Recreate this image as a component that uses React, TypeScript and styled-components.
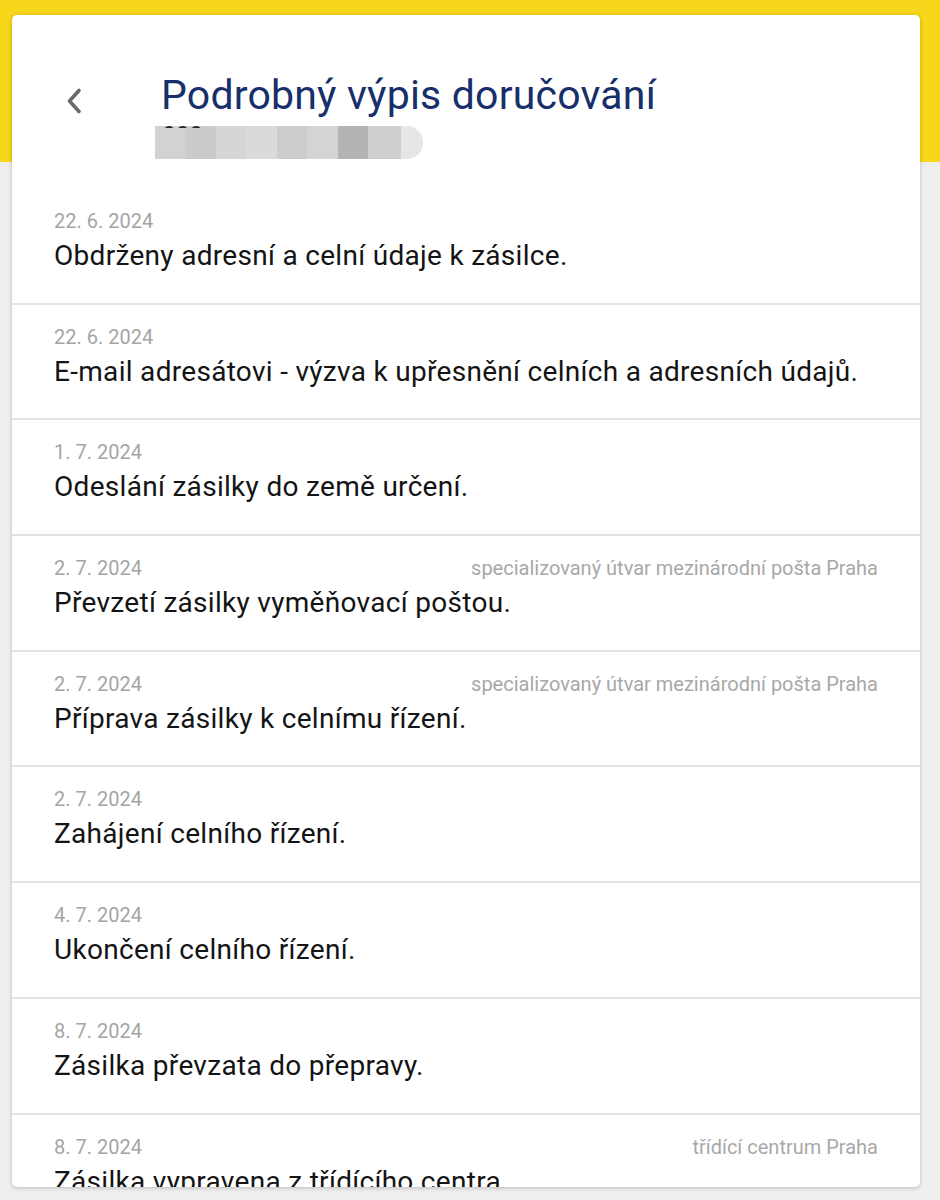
import React from 'react';
import styled, { createGlobalStyle } from 'styled-components';

const GlobalStyle = createGlobalStyle`
  html, body {
    margin: 0;
    padding: 0;
    background: #efefef;
    font-family: Roboto, "Noto Sans", "Liberation Sans", sans-serif;
  }
`;

const Page = styled.div`
  min-height: 1200px;
  background: linear-gradient(#f6d71b 0, #f6d71b 162px, #efefef 162px);
  padding: 15px 20px 0 12px;
  box-sizing: border-box;
`;

const Card = styled.div`
  background: #fff;
  border-radius: 5px;
  height: 1172px;
  overflow: hidden;
  box-shadow: 0 1px 4px rgba(0, 0, 0, 0.22);
`;

const Header = styled.div`
  height: 172px;
  display: flex;
  align-items: flex-start;
  box-sizing: border-box;
  padding: 60px 0 0 50px;
`;

const BackButton = styled.div`
  width: 24px;
  height: 40px;
  display: flex;
  align-items: center;
  justify-content: center;
  margin: 6px 75px 0 0;
`;

const TitleBlock = styled.div`
  display: flex;
  flex-direction: column;
`;

const Title = styled.h1`
  margin: 0;
  font-size: 41px;
  font-weight: 400;
  line-height: 41px;
  letter-spacing: 0.2px;
  color: #172f6a;
`;

const Blurred = styled.div`
  display: flex;
  margin: 10px 0 0 -6px;
  height: 33px;
  align-items: stretch;
  position: relative;
  width: 268px;
`;

const Pixel = styled.div<{ $shade: string; $w: number }>`
  width: ${(p) => p.$w}px;
  background: ${(p) => p.$shade};
`;

const PixelEnd = styled.div`
  width: 22px;
  background: #e6e6e6;
  border-radius: 0 16px 16px 0;
`;

const Peek = styled.div`
  position: absolute;
  left: 8px;
  top: -6px;
  width: 58px;
  height: 8px;
  overflow: hidden;
  color: #222;
  font-size: 22px;
  line-height: 22px;
  letter-spacing: 2px;
`;

const List = styled.div`
  display: flex;
  flex-direction: column;
`;

const Row = styled.div`
  height: 115.7px;
  box-sizing: border-box;
  padding: 20px 42px 0 42px;
  border-top: 2px solid #e3e3e3;
  &:first-child {
    border-top: none;
    padding-top: 22px;
  }
`;

const Meta = styled.div`
  display: flex;
  justify-content: space-between;
  align-items: center;
  height: 24px;
  font-size: 20px;
  color: #a5a5a5;
`;

const Place = styled.span`
  color: #a8a8a8;
`;

const Text = styled.div`
  margin-top: 6px;
  font-size: 28px;
  line-height: 34px;
  letter-spacing: 0.3px;
  color: #141414;
  white-space: nowrap;
`;

type Event = { date: string; text: string; place?: string };

const events: Event[] = [
  { date: '22. 6. 2024', text: 'Obdrženy adresní a celní údaje k zásilce.' },
  { date: '22. 6. 2024', text: 'E-mail adresátovi - výzva k upřesnění celních a adresních údajů.' },
  { date: '1. 7. 2024', text: 'Odeslání zásilky do země určení.' },
  { date: '2. 7. 2024', text: 'Převzetí zásilky vyměňovací poštou.', place: 'specializovaný útvar mezinárodní pošta Praha' },
  { date: '2. 7. 2024', text: 'Příprava zásilky k celnímu řízení.', place: 'specializovaný útvar mezinárodní pošta Praha' },
  { date: '2. 7. 2024', text: 'Zahájení celního řízení.' },
  { date: '4. 7. 2024', text: 'Ukončení celního řízení.' },
  { date: '8. 7. 2024', text: 'Zásilka převzata do přepravy.' },
  { date: '8. 7. 2024', text: 'Zásilka vypravena z třídícího centra.', place: 'třídící centrum Praha' },
];

const pixels: [string, number][] = [
  ['#d2d2d2', 30],
  ['#cbcbcb', 31],
  ['#d6d6d6', 30],
  ['#dadada', 31],
  ['#cdcdcd', 30],
  ['#d4d4d4', 31],
  ['#b4b4b4', 30],
  ['#cfcfcf', 33],
];

const App: React.FC = () => {
  return (
    <>
      <GlobalStyle />
      <Page>
        <Card>
          <Header>
            <BackButton>
              <svg width="20" height="28" viewBox="0 0 20 28">
                <path d="M15 3.5 L5.5 14 L15 24.5" fill="none" stroke="#6b6b6b" strokeWidth="3.6" strokeLinecap="round" strokeLinejoin="round" />
              </svg>
            </BackButton>
            <TitleBlock>
              <Title>Podrobný výpis doručování</Title>
              <Blurred>
                <Peek>ccc</Peek>
                {pixels.map(([shade, w], i) => (
                  <Pixel key={i} $shade={shade} $w={w} />
                ))}
                <PixelEnd />
              </Blurred>
            </TitleBlock>
          </Header>
          <List>
            {events.map((e, i) => (
              <Row key={i}>
                <Meta>
                  <span>{e.date}</span>
                  {e.place && <Place>{e.place}</Place>}
                </Meta>
                <Text>{e.text}</Text>
              </Row>
            ))}
          </List>
        </Card>
      </Page>
    </>
  );
};

export default App;
